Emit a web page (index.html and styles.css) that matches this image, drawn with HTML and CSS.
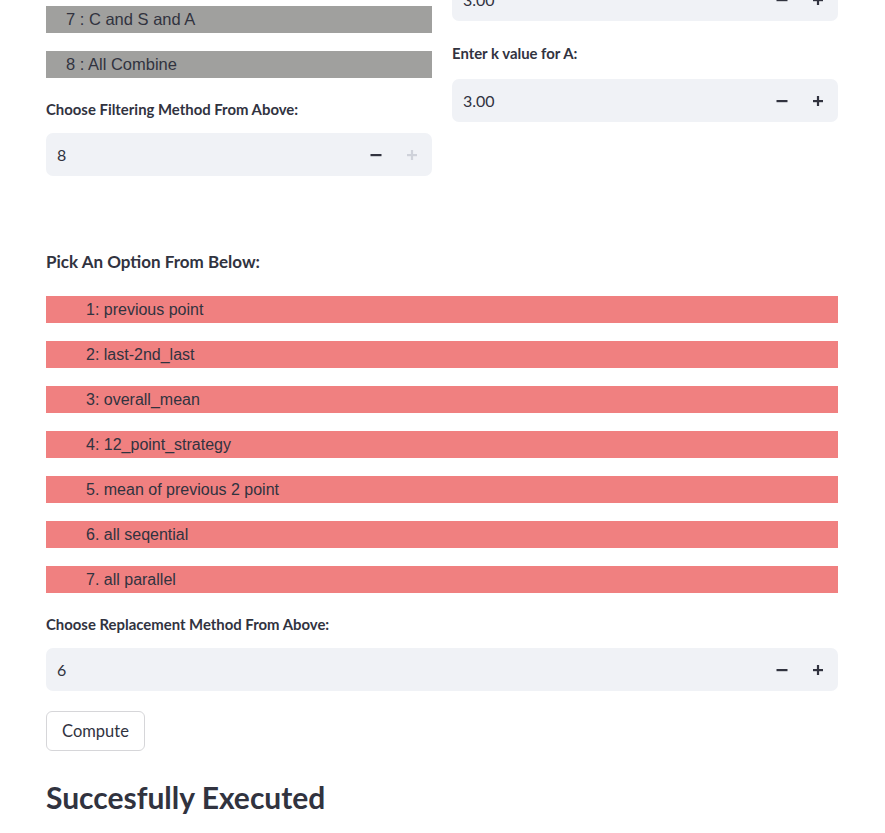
FILE: index.html
```html
<!DOCTYPE html>
<html>
<head>
<meta charset="utf-8">
<link rel="stylesheet" href="styles.css">
</head>
<body>
<main class="page">
  <div class="cols">
    <div class="col col-left">
      <p class="gray-bar">7 : C and S and A</p>
      <p class="gray-bar">8 : All Combine</p>
      <label class="label">Choose Filtering Method From Above:</label>
      <div class="num-input">
        <span class="num-value">8</span>
        <button class="step"><svg width="12" height="12" viewBox="0 0 12 12"><rect x="0.5" y="5" width="11" height="2.2" fill="#31333f"/></svg></button>
        <button class="step disabled"><svg width="12" height="12" viewBox="0 0 12 12"><rect x="1" y="5" width="10" height="2.2" fill="#cfd2da"/><rect x="4.9" y="1" width="2.2" height="10" fill="#cfd2da"/></svg></button>
      </div>
    </div>
    <div class="col col-right">
      <div class="num-input">
        <span class="num-value">3.00</span>
        <button class="step"><svg width="12" height="12" viewBox="0 0 12 12"><rect x="0.5" y="5" width="11" height="2.2" fill="#31333f"/></svg></button>
        <button class="step"><svg width="12" height="12" viewBox="0 0 12 12"><rect x="1" y="5" width="10" height="2.2" fill="#31333f"/><rect x="4.9" y="1" width="2.2" height="10" fill="#31333f"/></svg></button>
      </div>
      <label class="label">Enter k value for A:</label>
      <div class="num-input">
        <span class="num-value">3.00</span>
        <button class="step"><svg width="12" height="12" viewBox="0 0 12 12"><rect x="0.5" y="5" width="11" height="2.2" fill="#31333f"/></svg></button>
        <button class="step"><svg width="12" height="12" viewBox="0 0 12 12"><rect x="1" y="5" width="10" height="2.2" fill="#31333f"/><rect x="4.9" y="1" width="2.2" height="10" fill="#31333f"/></svg></button>
      </div>
    </div>
  </div>

  <p class="section-title">Pick An Option From Below:</p>
  <div class="options">
    <p class="red-bar">1: previous point</p>
    <p class="red-bar">2: last-2nd_last</p>
    <p class="red-bar">3: overall_mean</p>
    <p class="red-bar">4: 12_point_strategy</p>
    <p class="red-bar">5. mean of previous 2 point</p>
    <p class="red-bar">6. all seqential</p>
    <p class="red-bar">7. all parallel</p>
  </div>

  <label class="label label-repl">Choose Replacement Method From Above:</label>
  <div class="num-input">
    <span class="num-value">6</span>
    <button class="step"><svg width="12" height="12" viewBox="0 0 12 12"><rect x="0.5" y="5" width="11" height="2.2" fill="#31333f"/></svg></button>
    <button class="step"><svg width="12" height="12" viewBox="0 0 12 12"><rect x="1" y="5" width="10" height="2.2" fill="#31333f"/><rect x="4.9" y="1" width="2.2" height="10" fill="#31333f"/></svg></button>
  </div>

  <button class="btn">Compute</button>

  <h2 class="result">Succesfully Executed</h2>
</main>
</body>
</html>
```
FILE: styles.css
```css
html, body {
  margin: 0;
  padding: 0;
  background: #ffffff;
  overflow: hidden;
}
body {
  font-family: Lato, "Open Sans", sans-serif;
  color: #31333f;
}
.page {
  width: 792px;
  margin-left: 46px;
  display: flex;
  flex-direction: column;
}
.cols {
  display: flex;
  gap: 20px;
  margin-top: -22px;
}
.col {
  flex: 1;
  display: flex;
  flex-direction: column;
}
.col-left {
  padding-top: 28px;
}
.gray-bar {
  margin: 0 0 18px 0;
  height: 27px;
  line-height: 27px;
  background: #a0a09e;
  font-family: "Liberation Sans", Arial, sans-serif;
  font-size: 16.5px;
  padding-left: 20px;
  color: #31333f;
}
.label {
  display: block;
  font-size: 14.9px;
  font-weight: 700;
  line-height: 20px;
  margin: 3px 0 14px 0;
}
.col-right .label {
  margin-top: 22px;
  margin-bottom: 16px;
}
.num-input {
  display: flex;
  align-items: center;
  height: 43px;
  background: #f0f2f6;
  border-radius: 7px;
  padding-left: 11px;
  padding-right: 2px;
}
.num-value {
  flex: 1;
  font-size: 16px;
}
.step {
  width: 36px;
  height: 43px;
  border: none;
  background: transparent;
  padding: 0;
  display: flex;
  align-items: center;
  justify-content: center;
}
.section-title {
  margin: 74px 0 0 0;
  font-size: 17px;
  font-weight: 700;
  line-height: 24px;
}
.options {
  display: flex;
  flex-direction: column;
  gap: 18px;
  margin-top: 22px;
}
.red-bar {
  margin: 0;
  height: 27px;
  line-height: 27px;
  background: #f08080;
  font-family: "Liberation Sans", Arial, sans-serif;
  font-size: 16px;
  padding-left: 40px;
  color: #31333f;
}
.label-repl {
  margin-top: 21px;
  margin-bottom: 14px;
}
.btn {
  align-self: flex-start;
  margin-top: 20px;
  height: 40px;
  width: 99px;
  background: #ffffff;
  border: 1px solid #d6d6d9;
  border-radius: 6px;
  font-family: Lato, "Open Sans", sans-serif;
  font-size: 16.5px;
  color: #31333f;
}
.result {
  margin: 26px 0 0 0;
  font-size: 30px;
  font-weight: 700;
  line-height: 40px;
}
```
